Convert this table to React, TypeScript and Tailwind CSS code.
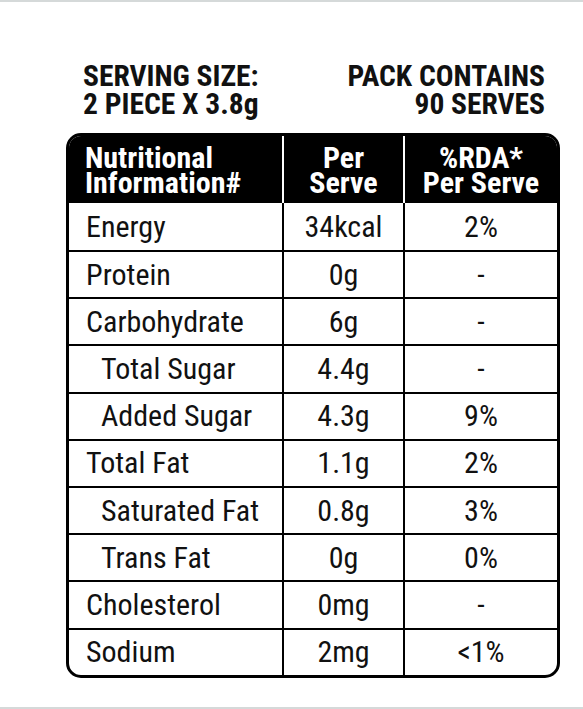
const rows: { name: string; indent?: boolean; per: string; rda: string }[] = [
  { name: "Energy", per: "34kcal", rda: "2%" },
  { name: "Protein", per: "0g", rda: "-" },
  { name: "Carbohydrate", per: "6g", rda: "-" },
  { name: "Total Sugar", indent: true, per: "4.4g", rda: "-" },
  { name: "Added Sugar", indent: true, per: "4.3g", rda: "9%" },
  { name: "Total Fat", per: "1.1g", rda: "2%" },
  { name: "Saturated Fat", indent: true, per: "0.8g", rda: "3%" },
  { name: "Trans Fat", indent: true, per: "0g", rda: "0%" },
  { name: "Cholesterol", per: "0mg", rda: "-" },
  { name: "Sodium", per: "2mg", rda: "<1%" },
];

export default function App() {
  return (
    <div className="h-[709px] w-[583px] bg-white border-t-2 border-b-2 border-[#d5d9d9] font-['Roboto_Condensed','Open_Sans_Condensed',sans-serif] text-[#111]">
      <div className="flex justify-between pl-[83px] pr-[38px] pt-[60px] text-[29.5px] font-bold leading-[28px]">
        <div>
          SERVING SIZE:
          <br />2 PIECE X 3.8g
        </div>
        <div className="text-right">
          PACK CONTAINS
          <br />90 SERVES
        </div>
      </div>
      <div className="ml-[66px] mt-[15px] w-[494px] border-[3px] border-black rounded-[15px] overflow-hidden">
        <div className="grid grid-cols-[213px_2px_119px_2px_1fr] h-[67px] bg-black text-white font-bold text-[30px] leading-[25px]">
          <div className="flex items-center pl-[16px]">
            <span>
              Nutritional
              <br />
              Information#
            </span>
          </div>
          <div className="bg-white" />
          <div className="flex items-center justify-center text-center">
            <span>
              Per
              <br />
              Serve
            </span>
          </div>
          <div className="bg-white" />
          <div className="flex items-center justify-center text-center">
            <span>
              %RDA*
              <br />
              Per Serve
            </span>
          </div>
        </div>
        {rows.map((r, i) => (
          <div
            key={r.name}
            className={`grid grid-cols-[213px_2px_119px_2px_1fr] text-[30px] leading-none ${i === 0 ? "h-[47px]" : "h-[47.2px] border-t-2 border-black"}`}
          >
            <div className={`flex items-center ${r.indent ? "pl-[32px]" : "pl-[17px]"}`}>{r.name}</div>
            <div className="bg-black" />
            <div className="flex items-center justify-center">{r.per}</div>
            <div className="bg-black" />
            <div className="flex items-center justify-center">{r.rda}</div>
          </div>
        ))}
      </div>
    </div>
  );
}
